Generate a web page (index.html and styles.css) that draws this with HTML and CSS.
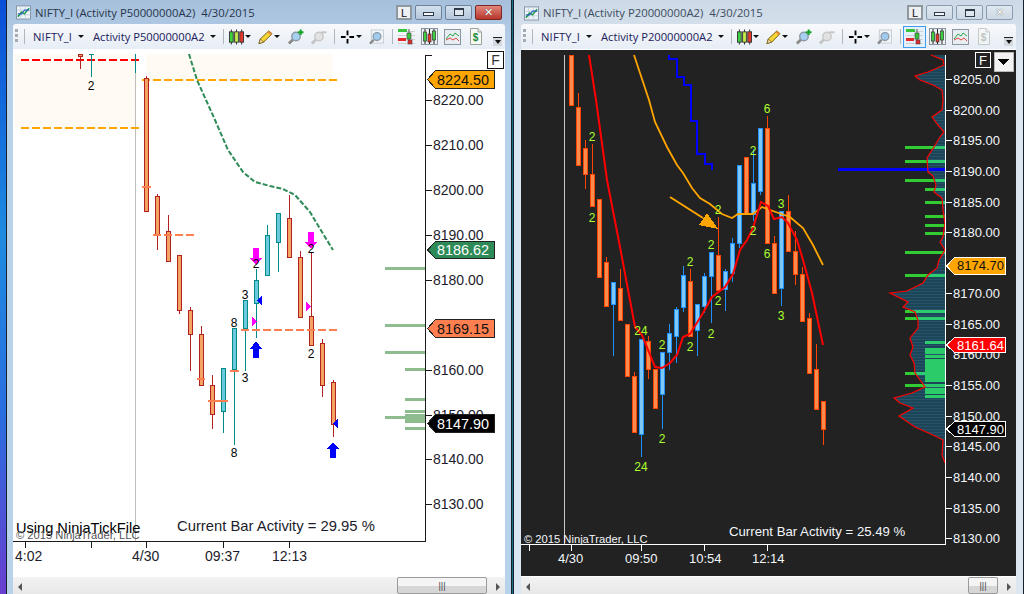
FILE: index.html
```html
<!DOCTYPE html>
<html lang="en">
<head>
    <meta charset="UTF-8">
    <title>NIFTY_I charts</title>
    <link rel="stylesheet" href="styles.css">
</head>
<body>
    <!-- icones da barra de ferramentas -->
    <svg class="icon-defs">
        <symbol id="i-chart" viewBox="0 0 16 16">
            <rect x=".5" y="1.5" width="15" height="14" fill="#eef3f8" stroke="#7f93a8"/>
            <path d="M1 6H15M1 11H15M5 2V15M10 2V15" stroke="#c8d3de" fill="none"/>
            <path d="M2 13L6 8L9 10L14 4" stroke="#1c9a3c" stroke-width="1.6" fill="none"/>
            <path d="M2 10L6 10L9 6L14 6" stroke="#2a62c8" stroke-width="1.2" fill="none"/>
        </symbol>
        <symbol id="i-candles" viewBox="0 0 16 16">
            <path d="M2.5 0V16M8 0V16M13.5 0V16" stroke="#222"/>
            <rect x=".5" y="2.5" width="4" height="11" fill="#3fd23f" stroke="#333"/>
            <rect x="6" y="2.5" width="4" height="11" fill="#c6ee4a" stroke="#333"/>
            <rect x="11.5" y="2.5" width="4" height="11" fill="#e8392c" stroke="#333"/>
        </symbol>
        <symbol id="i-pencil" viewBox="0 0 16 16">
            <path d="M1 15L2.5 10L11.500 1.500L15 4.500L6 13.500Z" fill="#f7d633" stroke="#6b5a12"/>
            <path d="M11.500 1.500L15 4.500L13.500 6L10 3Z" fill="#ee8a3a"/>
            <path d="M1 15L2.500 10L6 13.500Z" fill="#f3d7a8" stroke="#6b5a12" stroke-width=".7"/>
        </symbol>
        <symbol id="i-zoom-in" viewBox="0 0 18 16">
            <path d="M2 15L7 10" stroke="#8a8a8a" stroke-width="3"/>
            <circle cx="9.500" cy="7.500" r="4.500" fill="#a8d0f0" stroke="#8c9aa8" stroke-width="1.500"/>
            <path d="M14.500 0V6M11.500 3H17.500" stroke="#16a52c" stroke-width="2.200"/>
        </symbol>
        <symbol id="i-zoom-out" viewBox="0 0 18 16">
            <path d="M2 15L7 10" stroke="#c4c4c4" stroke-width="3"/>
            <circle cx="9.500" cy="7.500" r="4.500" fill="#e2e2e2" stroke="#c8c8c8" stroke-width="1.500"/>
            <path d="M12 3H17.500" stroke="#c4c4c4" stroke-width="2"/>
        </symbol>
        <symbol id="i-cross" viewBox="0 0 16 16">
            <path d="M8 1V6M8 10V15M1 8H6M10 8H15" stroke="#000" stroke-width="2"/>
        </symbol>
        <symbol id="i-find" viewBox="0 0 16 16">
            <rect x="2.500" y=".500" width="13" height="14" fill="#f2f5f8" stroke="#c4ccd4"/>
            <path d="M1 15L5 11" stroke="#8a8a8a" stroke-width="2.500"/>
            <circle cx="8.500" cy="7.500" r="4.200" fill="#9fcbee" stroke="#8c9aa8" stroke-width="1.400"/>
        </symbol>
        <symbol id="i-strategy" viewBox="0 0 17 17">
            <path d="M0 3.500H17M0 7.500H17M0 11.500H17M0 15.500H17" stroke="#d0d0d0"/>
            <path d="M11 1V16" stroke="#555"/>
            <rect x="0" y="1" width="9" height="3" fill="#35c43a"/>
            <rect x="9" y="5" width="4" height="6" fill="#35c43a" stroke="#444" stroke-width=".6"/>
            <rect x="0" y="10" width="8" height="3" fill="#e4282c"/>
            <rect x="10" y="12" width="4" height="4" fill="#e4282c" stroke="#444" stroke-width=".6"/>
        </symbol>
        <symbol id="i-framed" viewBox="0 0 17 17">
            <rect x=".5" y=".5" width="16" height="16" fill="#eef1f4" stroke="#8a96a2"/>
            <path d="M4 1V16M8.500 1V16M13 1V16" stroke="#222"/>
            <rect x="2.500" y="4" width="3" height="9" fill="#3fd23f" stroke="#333" stroke-width=".7"/>
            <rect x="7" y="6" width="3" height="8" fill="#e8392c" stroke="#333" stroke-width=".7"/>
            <rect x="11.500" y="3" width="3" height="9" fill="#3fd23f" stroke="#333" stroke-width=".7"/>
        </symbol>
        <symbol id="i-lines" viewBox="0 0 17 17">
            <rect x=".5" y="1.500" width="16" height="15" fill="#e8edf2" stroke="#8a96a2"/>
            <path d="M2 11L6 6L9 8L11 5L15 8" stroke="#27a64a" fill="none"/>
            <path d="M2 12L6 10L9 12L12 10L15 13" stroke="#e0443c" fill="none"/>
        </symbol>
        <symbol id="i-dollar" viewBox="0 0 17 17">
            <path d="M3.500 .500H11L14.500 4V16.500H3.500Z" fill="#f6f8f4" stroke="#9aa39a"/>
            <path d="M11 .500V4H14.500" fill="#dfe5dd" stroke="#9aa39a"/>
        </symbol>
    </svg>

    <div class="desktop-edge"></div>

    <!-- janela 1 -->
    <div class="window window-left">
        <div class="titlebar">
            <svg class="title-icon"><use href="#i-chart"/></svg>
            <span class="title-text">NIFTY_I (Activity P50000000A2)&nbsp; 4/30/2015</span>
            <div class="caption">
                <span class="btn-link">L</span>
                <span class="btn-caption"><i class="glyph-min"></i></span>
                <span class="btn-caption"><i class="glyph-max"></i></span>
                <span class="btn-caption btn-close"><i class="glyph-close">✕</i></span>
            </div>
        </div>
        <div class="toolbar">
            <i class="grip"></i><i class="sep sep-first"></i>
            <span class="tb-text tb-first">NIFTY_I</span><i class="drop drop-first"></i>
            <span class="tb-text tb-second">Activity P50000000A2</span><i class="drop"></i>
            <i class="sep sep-a"></i>
            <svg class="ico ico-candles"><use href="#i-candles"/></svg><i class="drop drop-ico"></i>
            <svg class="ico ico-b"><use href="#i-pencil"/></svg><i class="drop drop-ico"></i>
            <svg class="ico ico-wide"><use href="#i-zoom-in"/></svg>
            <svg class="ico ico-wide ico-out"><use href="#i-zoom-out"/></svg>
            <i class="sep sep-b"></i>
            <svg class="ico"><use href="#i-cross"/></svg><i class="drop drop-ico"></i>
            <svg class="ico ico-b"><use href="#i-find"/></svg>
            <i class="sep sep-c"></i>
            <span class="ico-box"><svg class="ico"><use href="#i-strategy"/></svg></span>
            <span class="ico-box"><svg class="ico"><use href="#i-framed"/></svg></span>
            <span class="ico-box"><svg class="ico"><use href="#i-lines"/></svg></span>
            <span class="ico-box"><svg class="ico"><use href="#i-dollar"/><text class="dollar dollar-on" x="8.500" y="13">$</text></svg></span>
            <i class="overflow"></i>
        </div>
        <svg class="chart chart-light" viewBox="13 50 492 527">
            <rect class="zone" x="14" y="54" width="121" height="74"/>
            <rect class="zone" x="146" y="54" width="187" height="26"/>
            <path class="session" d="M135.500 54V541"/>

            <path class="dash-red" d="M21 60H140"/>
            <path class="dash-orange" d="M21 128H140M142 80H338"/>
            <polyline class="dash-green" points="189,54 197,80 206,100 215,120 228,150 243,172 255,182 270,186 283,189 295,195 310,212 322,232 333,250"/>

            <!-- velas -->
            <path class="wick-down" d="M80.500 54V69M146.500 76V79M157.500 194V250M168.500 215V231M179.500 310V314M190.500 307V371M201.500 326V334M212.500 375V429M289.500 195V218M300.500 251V257M311.500 253V345M322.500 339V397M333.500 380V437"/>
            <path class="wick-up" d="M91.500 54V77M135.500 54V73M223.500 411V433M234.500 369V445M245.500 328V371M256.500 269V338M267.500 225V235M278.500 242V272"/>
            <path class="cap" d="M89 54.500H94"/>
            <path class="body-down" d="M78.500 54.500h4v2h-4zM144.500 78.500h4v133h-4zM155.500 196.500h4v38h-4zM166.500 231.500h4v30h-4zM177.500 255.500h4v55h-4zM188.500 310.500h4v24h-4zM199.500 334.500h4v51h-4zM210.500 385.500h4v29h-4zM287.500 218.500h4v39h-4zM298.500 257.500h4v60h-4zM309.500 316.500h4v29h-4zM320.500 343.500h4v42h-4zM331.500 382.500h4v42h-4z"/>
            <path class="body-up" d="M221.500 368.500h4v43h-4zM232.500 328.500h4v41h-4zM243.500 300.500h4v28h-4zM254.500 280.500h4v23h-4zM265.500 235.500h4v40h-4zM276.500 213.500h4v29h-4z"/>

            <path class="pivot" d="M153 234.500H195"/>
            <path class="pivot" d="M241 329.500H338"/>
            <path class="pivot-solid" d="M142 187H151M197 379H205M208 401H228M230 371H239"/>

            <polygon class="sig-magenta" points="253,248 259,248 259,258 262,258 256,265 250,258 253,258"/>
            <polygon class="sig-magenta" points="308,232 314,232 314,242 317,242 311,249 305,242 308,242"/>
            <polygon class="sig-blue" points="253,358 259,358 259,349 262,349 256,341 250,349 253,349"/>
            <polygon class="sig-blue" points="330,458 336,458 336,449 339,449 333,442 327,449 330,449"/>
            <polygon class="sig-blue" points="262,296 262,305 257,300.500"/>
            <polygon class="sig-blue" points="338,419 338,428 333,423.500"/>
            <polygon class="sig-magenta" points="252,317 252,326 257,321.500"/>
            <polygon class="sig-magenta" points="306,302 306,311 311,306.500"/>

            <g class="mark">
                <text x="91" y="90">2</text><text x="245" y="299">3</text><text x="234" y="327">8</text>
                <text x="245" y="382">3</text><text x="234" y="457">8</text><text x="256" y="268">2</text>
                <text x="311" y="253">2</text><text x="311" y="358">2</text>
            </g>

            <path class="vol" d="M385 268H425M385 325H425M385 352H425M405 369H425M405 399H425M405 411H425M385 417H425M405 428H425"/>
            <rect class="vol-block" x="405" y="414" width="20" height="9"/>

            <path class="frame" d="M13 541.500H425.500V55M426 55.500H432M426 100.500H432M426 145.500H432M426 190.500H432M426 235.500H432M426 280.500H432M426 370.500H432M426 415.500H432M426 459.500H432M426 504.500H432M25.500 542V548M91.500 542V548M146.500 542V548M223.500 542V548M289.500 542V548"/>

            <g class="axis-text">
                <text x="433" y="105">8220.00</text><text x="433" y="150">8210.00</text><text x="433" y="195">8200.00</text>
                <text x="433" y="240">8190.00</text><text x="433" y="285">8180.00</text><text x="433" y="375">8160.00</text>
                <text x="433" y="420">8150.00</text><text x="433" y="464">8140.00</text><text x="433" y="509">8130.00</text>
                <text x="15" y="561">4:02</text><text x="132" y="561">4/30</text><text x="205" y="561">09:37</text><text x="272" y="561">12:13</text>
            </g>
            <text class="activity" x="177" y="531">Current Bar Activity = 29.95 %</text>
            <text class="using" x="16" y="533">Using NinjaTickFile</text>
            <text class="copy" x="16" y="539">© 2015 NinjaTrader, LLC</text>

            <polygon class="tag tag-orange" points="427.500,79.500 435.500,70.500 494.500,70.500 494.500,88.500 435.500,88.500"/>
            <text class="tag-text" x="437" y="85">8224.50</text>
            <polygon class="tag tag-green" points="427.500,250 435.500,241.500 494.500,241.500 494.500,258.500 435.500,258.500"/>
            <text class="tag-text tag-text-white" x="437" y="255">8186.62</text>
            <polygon class="tag tag-coral" points="427.500,328.500 435.500,319.500 494.500,319.500 494.500,337.500 435.500,337.500"/>
            <text class="tag-text" x="437" y="334">8169.15</text>
            <polygon class="tag tag-black" points="427.500,423.500 435.500,414.500 494.500,414.500 494.500,432.500 435.500,432.500"/>
            <text class="tag-text tag-text-white" x="437" y="429">8147.90</text>

            <rect class="f-box" x="487.500" y="51.500" width="16" height="17"/>
            <text class="f-text" x="495.500" y="65">F</text>
        </svg>
        <div class="scrollbar">
            <i class="arrow-left"></i>
            <span class="thumb thumb-left"><b>|||</b></span>
            <i class="arrow-right"></i>
        </div>
    </div>

    <!-- janela 2 -->
    <div class="window window-right">
        <div class="titlebar">
            <svg class="title-icon"><use href="#i-chart"/></svg>
            <span class="title-text">NIFTY_I (Activity P20000000A2)&nbsp; 4/30/2015</span>
            <div class="caption">
                <span class="btn-link">L</span>
                <span class="btn-caption"><i class="glyph-min"></i></span>
                <span class="btn-caption"><i class="glyph-max"></i></span>
                <span class="btn-caption"><i class="glyph-close">✕</i></span>
            </div>
        </div>
        <div class="toolbar">
            <i class="grip"></i><i class="sep sep-first"></i>
            <span class="tb-text tb-first">NIFTY_I</span><i class="drop drop-first"></i>
            <span class="tb-text tb-second">Activity P20000000A2</span><i class="drop"></i>
            <i class="sep sep-a"></i>
            <svg class="ico ico-candles"><use href="#i-candles"/></svg><i class="drop drop-ico"></i>
            <svg class="ico ico-b"><use href="#i-pencil"/></svg><i class="drop drop-ico"></i>
            <svg class="ico ico-wide"><use href="#i-zoom-in"/></svg>
            <svg class="ico ico-wide ico-out"><use href="#i-zoom-out"/></svg>
            <i class="sep sep-b"></i>
            <svg class="ico"><use href="#i-cross"/></svg><i class="drop drop-ico"></i>
            <svg class="ico ico-b"><use href="#i-find"/></svg>
            <i class="sep sep-c"></i>
            <span class="ico-box ico-active"><svg class="ico"><use href="#i-strategy"/></svg></span>
            <span class="ico-box"><svg class="ico"><use href="#i-framed"/></svg></span>
            <span class="ico-box"><svg class="ico"><use href="#i-lines"/></svg></span>
            <span class="ico-box"><svg class="ico ico-faded"><use href="#i-dollar"/><text class="dollar" x="8.500" y="13">$</text></svg></span>
            <i class="overflow"></i>
        </div>
        <svg class="chart chart-dark" viewBox="521 50 495 527">
            <defs>
                <pattern id="scan" width="4" height="3" patternUnits="userSpaceOnUse">
                    <rect width="4" height="3" fill="#1c4557"/>
                    <rect width="4" height="1" fill="#26536a"/>
                </pattern>
                <clipPath id="profile-clip">
                    <polygon points="931,55 943,60 944,65 928,72 915,76 920,80 933,85 942,90 943,100 942,110 932,117 938,125 944,132 940,137 934,147 927,158 928,172 933,176 936,185 934,192 942,198 943,210 945,223 943,237 940,242 945,250 939,260 937,268 928,275 923,283 907,291 890,293 908,302 903,307 915,312 918,320 918,328 910,338 913,347 910,355 914,363 915,373 925,387 912,393 894,398 900,403 913,408 899,416 915,427 933,435 943,440 942,455 945,463 945,55"/>
                </clipPath>
            </defs>
            <path class="session-dark" d="M564.500 55V544"/>

            <!-- perfil de volume -->
            <path class="bars-back" d="M905 147.500H945M905 161.500H945M905 180.500H945M925 189.500H945M925 202.500H945M925 216.500H945M925 225.500H945M925 233.500H945M905 252.500H945M905 275.500H945M905 311.500H945M905 318.500H945M925 342.500H945M905 373.500H945M905 385.500H945"/>
            <rect class="bars-fill" x="925" y="348" width="20" height="6"/>
            <rect class="bars-fill" x="925" y="355" width="20" height="3"/>
            <rect class="bars-fill" x="925" y="359" width="20" height="23"/>
            <rect class="bars-fill" x="925" y="384" width="20" height="3"/>
            <rect class="bars-fill" x="925" y="388" width="20" height="6"/>
            <rect class="bars-fill" x="925" y="395" width="20" height="3"/>
            <g clip-path="url(#profile-clip)">
                <rect x="880" y="55" width="65" height="410" fill="url(#scan)"/>
                <path class="bars-over" d="M905 147.500H945M905 161.500H945M905 180.500H945M925 189.500H945M925 202.500H945M925 216.500H945M925 225.500H945M925 233.500H945M905 252.500H945M905 275.500H945M905 311.500H945M905 318.500H945M925 342.500H945M905 373.500H945M905 385.500H945"/>
                <path class="bars-over-fill" d="M925 348h20v6h-20zM925 355h20v3h-20zM925 359h20v23h-20zM925 384h20v3h-20zM925 388h20v6h-20zM925 395h20v3h-20z"/>
            </g>
            <path class="level-blue" d="M838 169.500H945"/>
            <polyline class="profile-line" points="931,55 943,60 944,65 928,72 915,76 920,80 933,85 942,90 943,100 942,110 932,117 938,125 944,132 940,137 934,147 927,158 928,172 933,176 936,185 934,192 942,198 943,210 945,223 943,237 940,242 945,250 939,260 937,268 928,275 923,283 907,291 890,293 908,302 903,307 915,312 918,320 918,328 910,338 913,347 910,355 914,363 915,373 925,387 912,393 894,398 900,403 913,408 899,416 915,427 933,435 943,440 942,455 945,463"/>

            <!-- velas -->
            <path class="wick-orange" d="M578.500 93V107M585.500 140V148M585.500 174V189M592.500 144V174M606.500 257V262M620.500 269V288M634.500 372V376M648.500 336V341M648.500 369V379M690.500 269V281M718.500 217V255M767.500 116V128M774.500 236V243M788.500 195V211M795.500 231V251M795.500 274V285M802.500 267V274M809.500 313V318M816.500 344V369M823.500 429V445"/>
            <path class="wick-blue" d="M613.500 304V356M641.500 434V457M662.500 394V429M669.500 324V333M669.500 352V370M676.500 307V309M676.500 336V363M683.500 266V275M683.500 307V312M697.500 330V356M704.500 273V276M704.500 306V313M711.500 276V323M725.500 269V271M725.500 289V311M732.500 238V243M732.500 273V282M739.500 243V248M753.500 149V183M753.500 214V221M760.500 191V195M781.500 288V306"/>
            <path class="body-orange" d="M569.500 55.500h4v50h-4zM576.500 107.500h4v58h-4zM583.500 148.500h4v26h-4zM590.500 174.500h4v32h-4zM597.500 199.500h4v78h-4zM604.500 262.500h4v44h-4zM618.500 288.500h4v32h-4zM625.500 324.500h4v52h-4zM632.500 376.500h4v56h-4zM646.500 341.500h4v28h-4zM653.500 369.500h4v39h-4zM688.500 281.500h4v55h-4zM716.500 255.500h4v35h-4zM744.500 157.500h4v57h-4zM765.500 128.500h4v115h-4zM772.500 243.500h4v50h-4zM786.500 211.500h4v40h-4zM793.500 251.500h4v23h-4zM800.500 274.500h4v47h-4zM807.500 318.500h4v55h-4zM814.500 369.500h4v40h-4zM821.500 401.500h4v28h-4z"/>
            <path class="body-blue" d="M611.500 282.500h4v22h-4zM639.500 339.500h4v95h-4zM660.500 352.500h4v42h-4zM667.500 333.500h4v19h-4zM674.500 309.500h4v27h-4zM681.500 275.500h4v32h-4zM695.500 304.500h4v26h-4zM702.500 276.500h4v30h-4zM709.500 252.500h4v24h-4zM723.500 271.500h4v18h-4zM730.500 243.500h4v30h-4zM737.500 165.500h4v78h-4zM751.500 183.500h4v31h-4zM758.500 128.500h4v63h-4zM779.500 211.500h4v77h-4z"/>

            <path class="level-step" d="M669 55V59H677V77H684V85H691V121H697V154H705V164H712V170"/>
            <polyline class="ma-orange" points="634,55 649,100 655,122 667,147 677,165 683,173 692,188 700,198 710,204 722,214 732,218 738,214 753,214 762,207 770,210 790,217 803,228 813,245 823,265"/>
            <polyline class="ma-red" points="589,55 596,100 607,180 620,247 635,327 642,335 655,367 662,368 670,363 677,355 683,337 690,334 703,313 712,297 725,287 733,274 740,250 747,240 753,228 761,202 768,206 774,219 782,217 788,223 797,240 803,260 812,293 823,345"/>

            <path class="arrow-line" d="M670 197L703 218"/>
            <polygon class="arrow-head" points="718,229 707,213 699,225"/>

            <g class="mark mark-green">
                <text x="767" y="113">6</text><text x="592" y="141">2</text><text x="753" y="155">2</text>
                <text x="592" y="222">2</text><text x="781" y="208">3</text><text x="718" y="214">2</text>
                <text x="753" y="235">2</text><text x="711" y="249">2</text><text x="767" y="258">6</text>
                <text x="690" y="266">2</text><text x="718" y="305">2</text><text x="781" y="320">3</text>
                <text x="641" y="335">24</text><text x="662" y="349">2</text><text x="690" y="351">2</text>
                <text x="711" y="338">2</text><text x="662" y="443">2</text><text x="641" y="471">24</text>
            </g>

            <path class="frame-dark" d="M521 544.500H945.500V55M946 79.500H952M946 110.500H952M946 140.500H952M946 171.500H952M946 202.500H952M946 232.500H952M946 293.500H952M946 324.500H952M946 385.500H952M946 416.500H952M946 446.500H952M946 477.500H952M946 508.500H952M946 538.500H952M529.500 545V551M571.500 545V551M641.500 545V551M704.500 545V551M767.500 545V551M521 576.500H1016"/>

            <g class="axis-text-dark">
                <text x="953" y="84">8205.00</text><text x="953" y="115">8200.00</text><text x="953" y="145">8195.00</text>
                <text x="953" y="176">8190.00</text><text x="953" y="207">8185.00</text><text x="953" y="237">8180.00</text>
                <text x="953" y="298">8170.00</text><text x="953" y="329">8165.00</text><text x="953" y="359">8160.00</text>
                <text x="953" y="390">8155.00</text><text x="953" y="421">8150.00</text><text x="953" y="451">8145.00</text>
                <text x="953" y="482">8140.00</text><text x="953" y="513">8135.00</text><text x="953" y="543">8130.00</text>
                <text x="558" y="563">4/30</text><text x="625" y="563">09:50</text><text x="689" y="563">10:54</text><text x="752" y="563">12:14</text>
            </g>
            <text class="activity-dark" x="729" y="536">Current Bar Activity = 25.49 %</text>
            <text class="copy-dark" x="524" y="543">© 2015 NinjaTrader, LLC</text>

            <polygon class="tag-dark tag-orange" points="946.500,266 954.500,257.500 1005.500,257.500 1005.500,274.500 954.500,274.500"/>
            <text class="tag-text-dark" x="957" y="270">8174.70</text>
            <polygon class="tag-dark tag-red" points="946.500,345 954.500,337.500 1005.500,337.500 1005.500,352.500 954.500,352.500"/>
            <text class="tag-text-dark tag-text-white" x="957" y="350">8161.64</text>
            <polygon class="tag-dark tag-black" points="946.500,429 954.500,421.500 1005.500,421.500 1005.500,436.500 954.500,436.500"/>
            <text class="tag-text-dark tag-text-white" x="957" y="434">8147.90</text>

            <rect class="f-box-dark" x="975.500" y="52.500" width="15" height="15"/>
            <text class="f-text-dark" x="983" y="65">F</text>
            <rect class="drop-btn" x="994.500" y="52.500" width="19" height="19" rx="1"/>
            <polygon class="drop-tri" points="998,59 1009,59 1003.500,65"/>
        </svg>
        <div class="scrollbar">
            <i class="arrow-left"></i>
            <span class="thumb thumb-right"><b>|||</b></span>
            <i class="arrow-right"></i>
        </div>
    </div>
</body>
</html>
```

FILE: styles.css
```css
* {
    box-sizing: border-box;
}

html, body {
    margin: 0;
    height: 594px;
    overflow: hidden;
}

body {
    display: flex;
    width: 1024px;
    background: #1a6f8a;
    font-family: "Open Sans", sans-serif;
}

.icon-defs {
    position: absolute;
    width: 0;
    height: 0;
}

.desktop-edge {
    width: 6px;
    background: linear-gradient(to bottom, #0a4fd8, #1f8be0 40%, #2a6ee0 70%, #6a3fd0);
}

/* Janelas */
.window {
    display: flex;
    flex-direction: column;
    height: 594px;
    border-left: 1px solid #16222c;
    border-right: 1px solid #16222c;
}

.window-left {
    width: 506px;
    padding: 0 6px;
    background: linear-gradient(to bottom, #a6bfdb, #b9d2ec 60px);
}

.window-right {
    width: 511px;
    margin-left: 1px;
    padding: 0 7px;
    background: linear-gradient(to bottom, #cdd9e6, #dde7f2 60px);
}

.titlebar {
    display: flex;
    align-items: center;
    height: 24px;
    flex: none;
    padding-left: 3px;
}

.window-right .titlebar {
    padding-left: 3px;
    padding-top: 1px;
}

.title-icon {
    width: 15px;
    height: 16px;
    flex: none;
}

.title-text {
    margin-left: 4px;
    font-size: 11.3px;
    color: #27364a;
    white-space: nowrap;
}

.window-right .title-text {
    color: #3c4c60;
}

.caption {
    display: flex;
    align-items: center;
    gap: 3px;
    margin-left: auto;
    margin-right: 3px;
}

.btn-link {
    width: 16px;
    height: 15px;
    border: 2px solid #8f979f;
    background: #eef1f4;
    font: 11px "Liberation Sans", sans-serif;
    line-height: 12px;
    text-align: center;
    color: #111;
}

.btn-caption {
    display: flex;
    align-items: center;
    justify-content: center;
    width: 27px;
    height: 15px;
    border: 1px solid #6d829a;
    border-radius: 2px;
    background: linear-gradient(to bottom, #d5e1ed, #b4c7da);
}

.btn-close {
    border-color: #7a2a24;
    background: linear-gradient(to bottom, #e2877c, #b8352b);
}

.window-right .btn-caption {
    background: linear-gradient(to bottom, #e0e8f0, #ccd8e4);
    border-color: #8a9cb0;
}

.glyph-min {
    width: 11px;
    height: 4px;
    margin-top: 3px;
    border: 1px solid #2c3a4a;
    background: #f4f6f8;
}

.glyph-max {
    width: 10px;
    height: 8px;
    border: 1px solid #2c3a4a;
    border-top-width: 2px;
    background: #dfe6ee;
}

.glyph-close {
    font: normal bold 11px "DejaVu Sans", sans-serif;
    line-height: 13px;
    color: #fff;
    text-shadow: 0 0 1px #333;
}

/* Barra de ferramentas */
.toolbar {
    display: flex;
    align-items: center;
    position: relative;
    height: 26px;
    flex: none;
    padding-left: 2px;
    border-bottom: 1px solid #fff;
    border-radius: 3px 3px 0 0;
    background: linear-gradient(to bottom, #f8f9fb, #e6edf5);
}

.grip {
    width: 3px;
    height: 15px;
    flex: none;
    background: repeating-linear-gradient(to bottom, #a4acb6 0, #a4acb6 3px, transparent 3px, transparent 5px);
}

.sep {
    width: 1px;
    height: 15px;
    flex: none;
    background: #aeb6c0;
}

.sep-first {
    margin: 0 8px 0 6px;
}

.tb-text {
    font-size: 11.2px;
    color: #20205a;
    white-space: nowrap;
}

.tb-first {
    width: 40px;
    letter-spacing: .2px;
}

.tb-second {
    width: 111px;
    margin-left: 9px;
}

.drop {
    width: 0;
    height: 0;
    flex: none;
    margin-left: 6px;
    border-left: 3px solid transparent;
    border-right: 3px solid transparent;
    border-top: 3px solid #111;
}

.drop-first {
    margin-left: 5px;
}

.drop-ico {
    margin-left: 1px;
}

.sep-a {
    margin: 0 5px 0 7px;
}

.sep-b {
    margin: 0 5px 0 7px;
}

.sep-c {
    margin: 0 2px 0 8px;
}

.ico {
    width: 15px;
    height: 16px;
    flex: none;
}

.ico-b {
    margin-left: 7px;
}

.ico-wide {
    width: 17px;
    margin-left: 7px;
}

.ico-out {
    margin-left: 6px;
}

.ico-box {
    display: flex;
    align-items: center;
    justify-content: center;
    flex: none;
    width: 23px;
    height: 22px;
    border: 1px solid transparent;
}

.ico-box .ico {
    width: 17px;
    height: 17px;
}

.ico-active {
    border-color: #3d9bf0;
    background: #e4f1fb;
}

.ico-faded {
    opacity: .5;
}

.dollar {
    font: bold 10px "Liberation Sans", sans-serif;
    fill: #8c948c;
    text-anchor: middle;
}

.dollar-on {
    fill: #1c8a34;
}

.overflow {
    position: absolute;
    right: 3px;
    bottom: 3px;
    width: 9px;
    height: 9px;
    border-top: 1px solid #222;
    background: #d4d9df;
}

.overflow::after {
    content: "";
    display: block;
    width: 0;
    margin: 2px auto 0;
    border-left: 3px solid transparent;
    border-right: 3px solid transparent;
    border-top: 4px solid #111;
}

/* Graficos */
.chart {
    display: block;
    width: 100%;
    flex: 1;
    min-height: 0;
}

.chart-light {
    background: #fff;
}

.chart-dark {
    background: #222;
}

.chart path, .chart rect, .chart polygon {
    shape-rendering: crispEdges;
}

.zone {
    fill: #fffaf3;
}

.session {
    stroke: #bebebe;
    fill: none;
}

.session-dark {
    stroke: #c8c8c8;
    fill: none;
}

.dash-red {
    fill: none;
    stroke: #f00;
    stroke-width: 2;
    stroke-dasharray: 8 3;
}

.dash-orange {
    fill: none;
    stroke: #ffa500;
    stroke-width: 2;
    stroke-dasharray: 8 3;
}

.dash-green {
    fill: none;
    stroke: #2e8b57;
    stroke-width: 2;
    stroke-dasharray: 5 2;
}

.wick-down {
    fill: none;
    stroke: #b22222;
}

.wick-up, .cap {
    fill: none;
    stroke: #008b8b;
}

.body-down {
    fill: #f4a460;
    stroke: #b22222;
}

.body-up {
    fill: #6cc8dc;
    stroke: #008b8b;
}

.pivot {
    fill: none;
    stroke: #ff7f50;
    stroke-width: 2;
    stroke-dasharray: 8 3;
}

.pivot-solid {
    fill: none;
    stroke: #ff7f50;
    stroke-width: 2;
}

.sig-magenta {
    fill: #f0f;
}

.sig-blue {
    fill: #00f;
}

.mark text {
    font: 12px "Liberation Sans", sans-serif;
    fill: #000;
    text-anchor: middle;
}

.mark-green text {
    fill: #adff2f;
}

.vol {
    fill: none;
    stroke: #8fbc8f;
    stroke-width: 3;
}

.vol-block {
    fill: #8fbc8f;
}

.frame {
    fill: none;
    stroke: #1a1a1a;
}

.frame-dark {
    fill: none;
    stroke: #fff;
}

.axis-text text {
    font: 14px "Liberation Sans", sans-serif;
    fill: #1c1c2c;
}

.axis-text-dark text {
    font: 13px "Liberation Sans", sans-serif;
    fill: #f2f6fa;
}

.activity {
    font: 14.800px "Liberation Sans", sans-serif;
    fill: #1c1c2c;
}

.activity-dark {
    font: 13.200px "Liberation Sans", sans-serif;
    fill: #f2f6fa;
}

.using {
    font: 14.600px "Liberation Sans", sans-serif;
    fill: #000;
}

.copy {
    font: 11.200px "Liberation Sans", sans-serif;
    fill: #555;
}

.copy-dark {
    font: 11.200px "Liberation Sans", sans-serif;
    fill: #f2f6fa;
}

.tag, .tag-dark {
    stroke: #222;
}

.tag-dark {
    stroke: #fff;
}

.tag-orange {
    fill: #ffa500;
}

.tag-green {
    fill: #2e8b57;
}

.tag-coral {
    fill: #ff7f50;
}

.tag-black {
    fill: #000;
}

.tag-red {
    fill: #f00;
}

.tag-text {
    font: 14.400px "Liberation Sans", sans-serif;
    fill: #111;
}

.tag-text-dark {
    font: 13px "Liberation Sans", sans-serif;
    fill: #111;
}

.tag-text-white {
    fill: #fff;
}

.f-box {
    fill: #fff;
    stroke: #111;
}

.f-text {
    font: 14px "Liberation Sans", sans-serif;
    fill: #333;
    text-anchor: middle;
}

.f-box-dark {
    fill: #222;
    stroke: #fff;
}

.f-text-dark {
    font: 13px "Liberation Sans", sans-serif;
    fill: #fff;
    text-anchor: middle;
}

.drop-btn {
    fill: #f2f2f2;
    stroke: #b8b8b8;
}

.drop-tri {
    fill: #000;
}

.bars-back, .bars-over {
    fill: none;
    stroke-width: 3;
}

.bars-back {
    stroke: #32cd32;
}

.bars-over {
    stroke: #2ecc71;
}

.bars-fill {
    fill: #32cd32;
}

.bars-over-fill {
    fill: #2acb68;
}

.profile-line {
    fill: none;
    stroke: #f00;
    stroke-width: 1.200;
}

.level-blue {
    fill: none;
    stroke: #00f;
    stroke-width: 3;
}

.level-step {
    fill: none;
    stroke: #00f;
    stroke-width: 2;
}

.wick-orange {
    fill: none;
    stroke: #ff4500;
}

.wick-blue {
    fill: none;
    stroke: #1e90ff;
}

.body-orange {
    fill: #f98b4c;
    stroke: #ff4500;
}

.body-blue {
    fill: #7ec8f5;
    stroke: #1e90ff;
}

.ma-orange {
    fill: none;
    stroke: #ffa500;
    stroke-width: 1.800;
}

.ma-red {
    fill: none;
    stroke: #f00;
    stroke-width: 2;
}

.chart .arrow-line {
    fill: none;
    stroke: #ffa500;
    stroke-width: 2;
    shape-rendering: auto;
}

.arrow-head {
    fill: #ffa500;
}

/* Barra de rolagem */
.scrollbar {
    display: flex;
    align-items: center;
    position: relative;
    height: 17px;
    flex: none;
    background: linear-gradient(to bottom, #f2f2f2, #e8e8e8);
}

.arrow-left, .arrow-right {
    position: absolute;
    top: 6px;
    width: 0;
    height: 0;
    border-top: 4px solid transparent;
    border-bottom: 4px solid transparent;
}

.arrow-left {
    left: 5px;
    border-right: 4px solid #555;
}

.arrow-right {
    right: 5px;
    border-left: 4px solid #555;
}

.thumb {
    position: absolute;
    top: 0;
    display: flex;
    align-items: center;
    justify-content: center;
    height: 17px;
    border: 1px solid #9a9a9a;
    border-radius: 2px;
    background: linear-gradient(to bottom, #f4f4f4 50%, #d6d6d6 50%);
}

.thumb b {
    font: 9px "Liberation Sans", sans-serif;
    color: #444;
}

.thumb-left {
    left: 384px;
    width: 90px;
}

.thumb-right {
    left: 447px;
    width: 30px;
}
```
